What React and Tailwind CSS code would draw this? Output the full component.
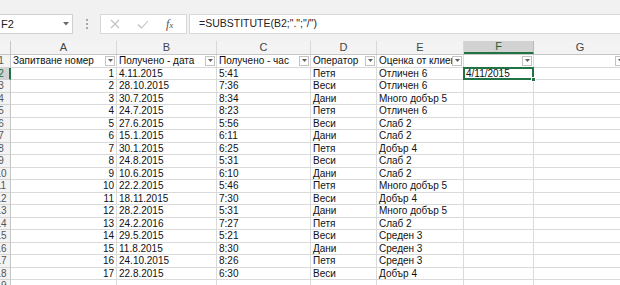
import React from "react";

const data = [
  [1, "4.11.2015", "5:41", "Петя", "Отличен 6"],
  [2, "28.10.2015", "7:36", "Веси", "Отличен 6"],
  [3, "30.7.2015", "8:34", "Дани", "Много добър 5"],
  [4, "24.7.2015", "8:23", "Петя", "Отличен 6"],
  [5, "27.6.2015", "5:56", "Веси", "Слаб 2"],
  [6, "15.1.2015", "6:11", "Дани", "Слаб 2"],
  [7, "30.1.2015", "6:25", "Петя", "Добър 4"],
  [8, "24.8.2015", "5:31", "Веси", "Слаб 2"],
  [9, "10.6.2015", "6:10", "Дани", "Слаб 2"],
  [10, "22.2.2015", "5:46", "Петя", "Много добър 5"],
  [11, "18.11.2015", "7:30", "Веси", "Добър 4"],
  [12, "28.2.2015", "5:31", "Дани", "Много добър 5"],
  [13, "24.2.2016", "7:27", "Петя", "Слаб 2"],
  [14, "29.5.2015", "5:21", "Веси", "Среден 3"],
  [15, "11.8.2015", "8:30", "Дани", "Среден 3"],
  [16, "24.10.2015", "8:26", "Петя", "Среден 3"],
  [17, "22.8.2015", "6:30", "Веси", "Добър 4"],
];

const widths = ["w-[106px]", "w-[100px]", "w-[94px]", "w-[66px]", "w-[87px]", "w-[70px]", "w-[93px]"];
const letters = ["A", "B", "C", "D", "E", "F", "G"];
const headers = ["Запитване номер", "Получено - дата", "Получено - час", "Оператор", "Оценка от клиент", "", ""];

function FilterBtn() {
  return (
    <div className="shrink-0 w-[10px] h-[10px] mr-[1px] border border-[#c3c3c3] bg-white flex items-center justify-center">
      <svg width="5" height="3" viewBox="0 0 5 3">
        <path d="M0 0H5L2.5 3Z" fill="#606060" />
      </svg>
    </div>
  );
}

function RowHead({ n, active }) {
  return (
    <div
      className={
        "w-[11px] shrink-0 overflow-hidden h-full border-b border-[#d4d4d4] text-[10px] " +
        (active ? "bg-[#d2d2d2] text-[#217346] border-r-2 border-r-[#217346]" : "bg-[#f3f3f3] text-[#555] border-r border-r-[#c6c6c6]")
      }
    >
      <div className="w-[22px] -ml-[10px] text-center leading-[12px]">{n}</div>
    </div>
  );
}

function Cell({ i, children, right, extra = "" }) {
  return (
    <div
      className={
        widths[i] +
        " shrink-0 h-full border-r border-b border-[#dadada] overflow-hidden whitespace-nowrap px-[2px] leading-[12px] relative " +
        (right ? "text-right " : "") +
        extra
      }
    >
      {children}
    </div>
  );
}

export default function App() {
  return (
    <div
      className="w-[620px] h-[285px] overflow-hidden bg-white text-[10px] text-[#111]"
      style={{ fontFamily: '"Liberation Sans", Arial, sans-serif' }}
    >
      {/* formula bar */}
      <div className="h-[41px] bg-[#f1f1f1] flex items-start pt-[14px]">
        <div className="w-[73px] h-[20px] bg-white border border-l-0 border-[#d0d0d0] flex items-center justify-between pr-[3px]">
          <span className="text-[11px] text-[#222] pl-[1px]">F2</span>
          <svg width="6" height="4" viewBox="0 0 6 4">
            <path d="M0 0H6L3 3.5Z" fill="#6b6b6b" />
          </svg>
        </div>
        <div className="w-[27px] h-[20px] flex flex-col items-center justify-center gap-[2px]">
          <div className="w-[2px] h-[2px] bg-[#a8a8a8]" />
          <div className="w-[2px] h-[2px] bg-[#a8a8a8]" />
          <div className="w-[2px] h-[2px] bg-[#a8a8a8]" />
        </div>
        <div className="w-[87px] h-[20px] bg-white border border-[#d8d8d8] flex items-center">
          <svg className="ml-[9px]" width="10" height="10" viewBox="0 0 10 10">
            <path d="M1 1L9 9M9 1L1 9" stroke="#c0c0c0" strokeWidth="1.1" fill="none" />
          </svg>
          <svg className="ml-[17px]" width="12" height="9" viewBox="0 0 12 9">
            <path d="M1 4.5L4.5 8L11 1" stroke="#c0c0c0" strokeWidth="1.1" fill="none" />
          </svg>
          <span
            className="ml-[17px] text-[12px] italic text-[#555] leading-none"
            style={{ fontFamily: '"Liberation Serif", "Times New Roman", serif' }}
          >
            f<span className="text-[9px]">x</span>
          </span>
        </div>
        <div className="flex-1 ml-[2px] h-[20px] bg-white border border-r-0 border-[#d8d8d8] flex items-center pl-[9px] text-[10.5px] text-[#222]">
          =SUBSTITUTE(B2;".";"/")
        </div>
      </div>

      {/* column header */}
      <div className="flex h-[14px] bg-[#f3f3f3] border-b border-[#c6c6c6]">
        <div className="w-[11px] shrink-0 border-r border-[#c6c6c6]" />
        {letters.map((l, i) => (
          <div
            key={l}
            className={
              widths[i] +
              " shrink-0 h-full flex items-center justify-center leading-none text-[11px] " +
              (i === 5
                ? "bg-[#d2d2d2] text-[#1e5f3b] border-b-2 border-[#217346] border-r border-r-[#b8b8b8]"
                : "text-[#444] border-r border-[#d8d8d8]")
            }
          >
            {l}
          </div>
        ))}
      </div>

      {/* row 1 */}
      <div className="flex h-[12.5px]">
        <RowHead n={1} />
        {headers.map((h, i) => (
          <div
            key={i}
            className={widths[i] + " shrink-0 h-full border-r border-b border-[#dadada] flex items-center overflow-hidden"}
          >
            <span className="flex-1 overflow-hidden whitespace-nowrap pl-[2px] leading-[12px]">{h}</span>
            <FilterBtn />
          </div>
        ))}
      </div>

      {/* data rows */}
      {data.map((r, idx) => (
        <div key={idx} className="flex h-[12.5px]">
          <RowHead n={idx + 2} active={idx === 0} />
          <Cell i={0} right>
            {r[0]}
          </Cell>
          <Cell i={1}>{r[1]}</Cell>
          <Cell i={2}>{r[2]}</Cell>
          <Cell i={3}>{r[3]}</Cell>
          <Cell i={4}>{r[4]}</Cell>
          <Cell i={5} extra={idx === 0 ? "overflow-visible" : ""}>
            {idx === 0 && (
              <>
                <span className="relative z-10">4/11/2015</span>
                <div className="absolute -top-[1px] -left-[1px] -right-[1px] -bottom-[1px] border-2 border-[#217346] z-20" />
                <div className="absolute -right-[3px] -bottom-[3px] w-[5px] h-[5px] bg-[#217346] border border-white z-30" />
              </>
            )}
          </Cell>
          <Cell i={6} />
        </div>
      ))}
      <div className="flex h-[12.5px]">
        <RowHead n={19} />
        {widths.map((w, i) => (
          <Cell key={i} i={i} />
        ))}
      </div>
    </div>
  );
}
